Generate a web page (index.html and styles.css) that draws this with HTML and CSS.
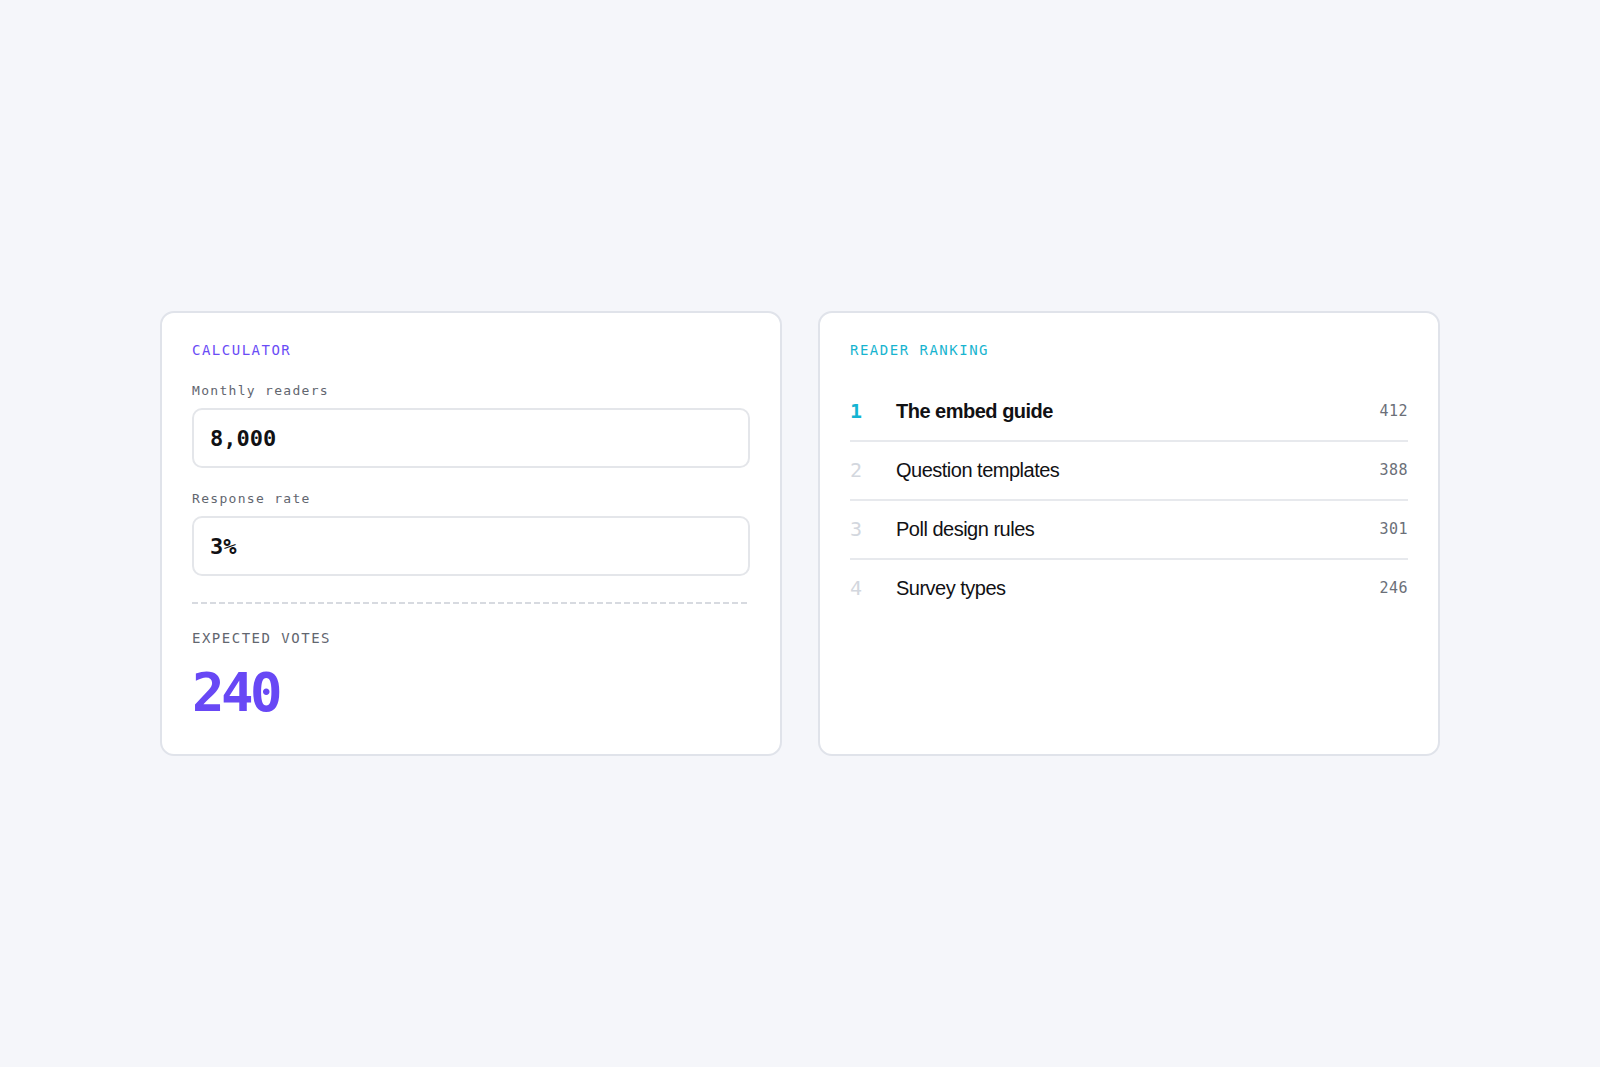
FILE: index.html
```html
<!DOCTYPE html>
<html lang="en">
<head>
<meta charset="utf-8">
<title>Calculator &amp; reader ranking</title>
<link rel="stylesheet" href="styles.css">
</head>
<body>
<main class="board">
  <section class="card calc">
    <h2 class="eyebrow eyebrow--violet">CALCULATOR</h2>
    <label class="field">
      <span class="field-label">Monthly readers</span>
      <input class="field-input" type="text" value="8,000" readonly>
    </label>
    <label class="field">
      <span class="field-label">Response rate</span>
      <input class="field-input" type="text" value="3%" readonly>
    </label>
    <hr class="divider">
    <div class="result">
      <span class="result-label">EXPECTED VOTES</span>
      <span class="result-value">240</span>
    </div>
  </section>

  <section class="card ranking">
    <h2 class="eyebrow eyebrow--cyan">READER RANKING</h2>
    <ol class="rank-list">
      <li class="rank-row is-top">
        <span class="rank-pos">1</span>
        <span class="rank-title">The embed guide</span>
        <span class="rank-count">412</span>
      </li>
      <li class="rank-row">
        <span class="rank-pos">2</span>
        <span class="rank-title">Question templates</span>
        <span class="rank-count">388</span>
      </li>
      <li class="rank-row">
        <span class="rank-pos">3</span>
        <span class="rank-title">Poll design rules</span>
        <span class="rank-count">301</span>
      </li>
      <li class="rank-row">
        <span class="rank-pos">4</span>
        <span class="rank-title">Survey types</span>
        <span class="rank-count">246</span>
      </li>
    </ol>
  </section>
</main>
</body>
</html>
```

FILE: styles.css
```css
* {
  box-sizing: border-box;
}

html,
body {
  margin: 0;
  height: 100%;
}

body {
  background: #f5f6fa;
  display: flex;
  align-items: center;
  justify-content: center;
  font-family: "Liberation Sans", Arial, sans-serif;
  color: #111114;
}

.board {
  width: 1280px;
  display: grid;
  grid-template-columns: 1fr 1fr;
  gap: 36px;
}

.card {
  background: #ffffff;
  border: 2px solid #e0e3ea;
  border-radius: 14px;
  padding: 27px 30px 34px;
  display: flex;
  flex-direction: column;
}

/* small uppercase card headings */
.eyebrow {
  margin: 0 0 22px;
  font-family: "DejaVu Sans Mono", monospace;
  font-size: 14px;
  line-height: 20px;
  font-weight: 400;
  letter-spacing: 1.5px;
}

.eyebrow--violet {
  color: #6a4cf6;
}

.eyebrow--cyan {
  color: #18b4cf;
  margin-bottom: 23px;
}

/* calculator fields */
.field {
  display: flex;
  flex-direction: column;
  gap: 8px;
}

.field + .field {
  margin-top: 22px;
}

.field-label {
  font-family: "DejaVu Sans Mono", monospace;
  font-size: 13px;
  line-height: 18px;
  letter-spacing: 1.3px;
  color: #62666f;
}

.field-input {
  display: block;
  width: 100%;
  height: 60px;
  margin: 0;
  padding: 0 16px;
  border: 2px solid #e4e6ea;
  border-radius: 10px;
  background: #ffffff;
  font-family: "DejaVu Sans Mono", monospace;
  font-size: 22px;
  font-weight: 700;
  color: #111114;
  outline: none;
}

/* dashed rule, dashes spaced so both ends finish on a dash */
.divider {
  margin: 26px 0 24px;
  height: 2px;
  border: 0;
  background-image: linear-gradient(90deg, #d7dae0 6px, transparent 6px);
  background-size: 9px 2px;
  background-repeat: space no-repeat;
}

.result {
  display: flex;
  flex-direction: column;
  gap: 18px;
}

.result-label {
  font-family: "DejaVu Sans Mono", monospace;
  font-size: 14px;
  line-height: 20px;
  letter-spacing: 1.5px;
  color: #62666f;
}

.result-value {
  font-family: "DejaVu Sans Mono", monospace;
  font-size: 54px;
  line-height: 54px;
  font-weight: 700;
  letter-spacing: -3.5px;
  color: #6848f5;
}

/* ranking list */
.rank-list {
  list-style: none;
  margin: 0;
  padding: 0;
}

.rank-row {
  display: grid;
  grid-template-columns: 46px 1fr auto;
  align-items: center;
  padding: 16px 0;
  border-bottom: 2px solid #e7e9ed;
}

.rank-row:last-child {
  border-bottom: 0;
}

.rank-pos {
  font-family: "DejaVu Sans Mono", monospace;
  font-size: 20px;
  line-height: 25px;
  color: #d3d7de;
}

.rank-title {
  font-size: 20px;
  line-height: 25px;
  letter-spacing: -0.5px;
  color: #111114;
}

.rank-count {
  font-family: "DejaVu Sans Mono", monospace;
  font-size: 15px;
  line-height: 25px;
  letter-spacing: 0.5px;
  color: #6b6f78;
}

.is-top .rank-pos {
  color: #14b4d2;
  font-weight: 700;
}

.is-top .rank-title {
  font-weight: 700;
}
```
